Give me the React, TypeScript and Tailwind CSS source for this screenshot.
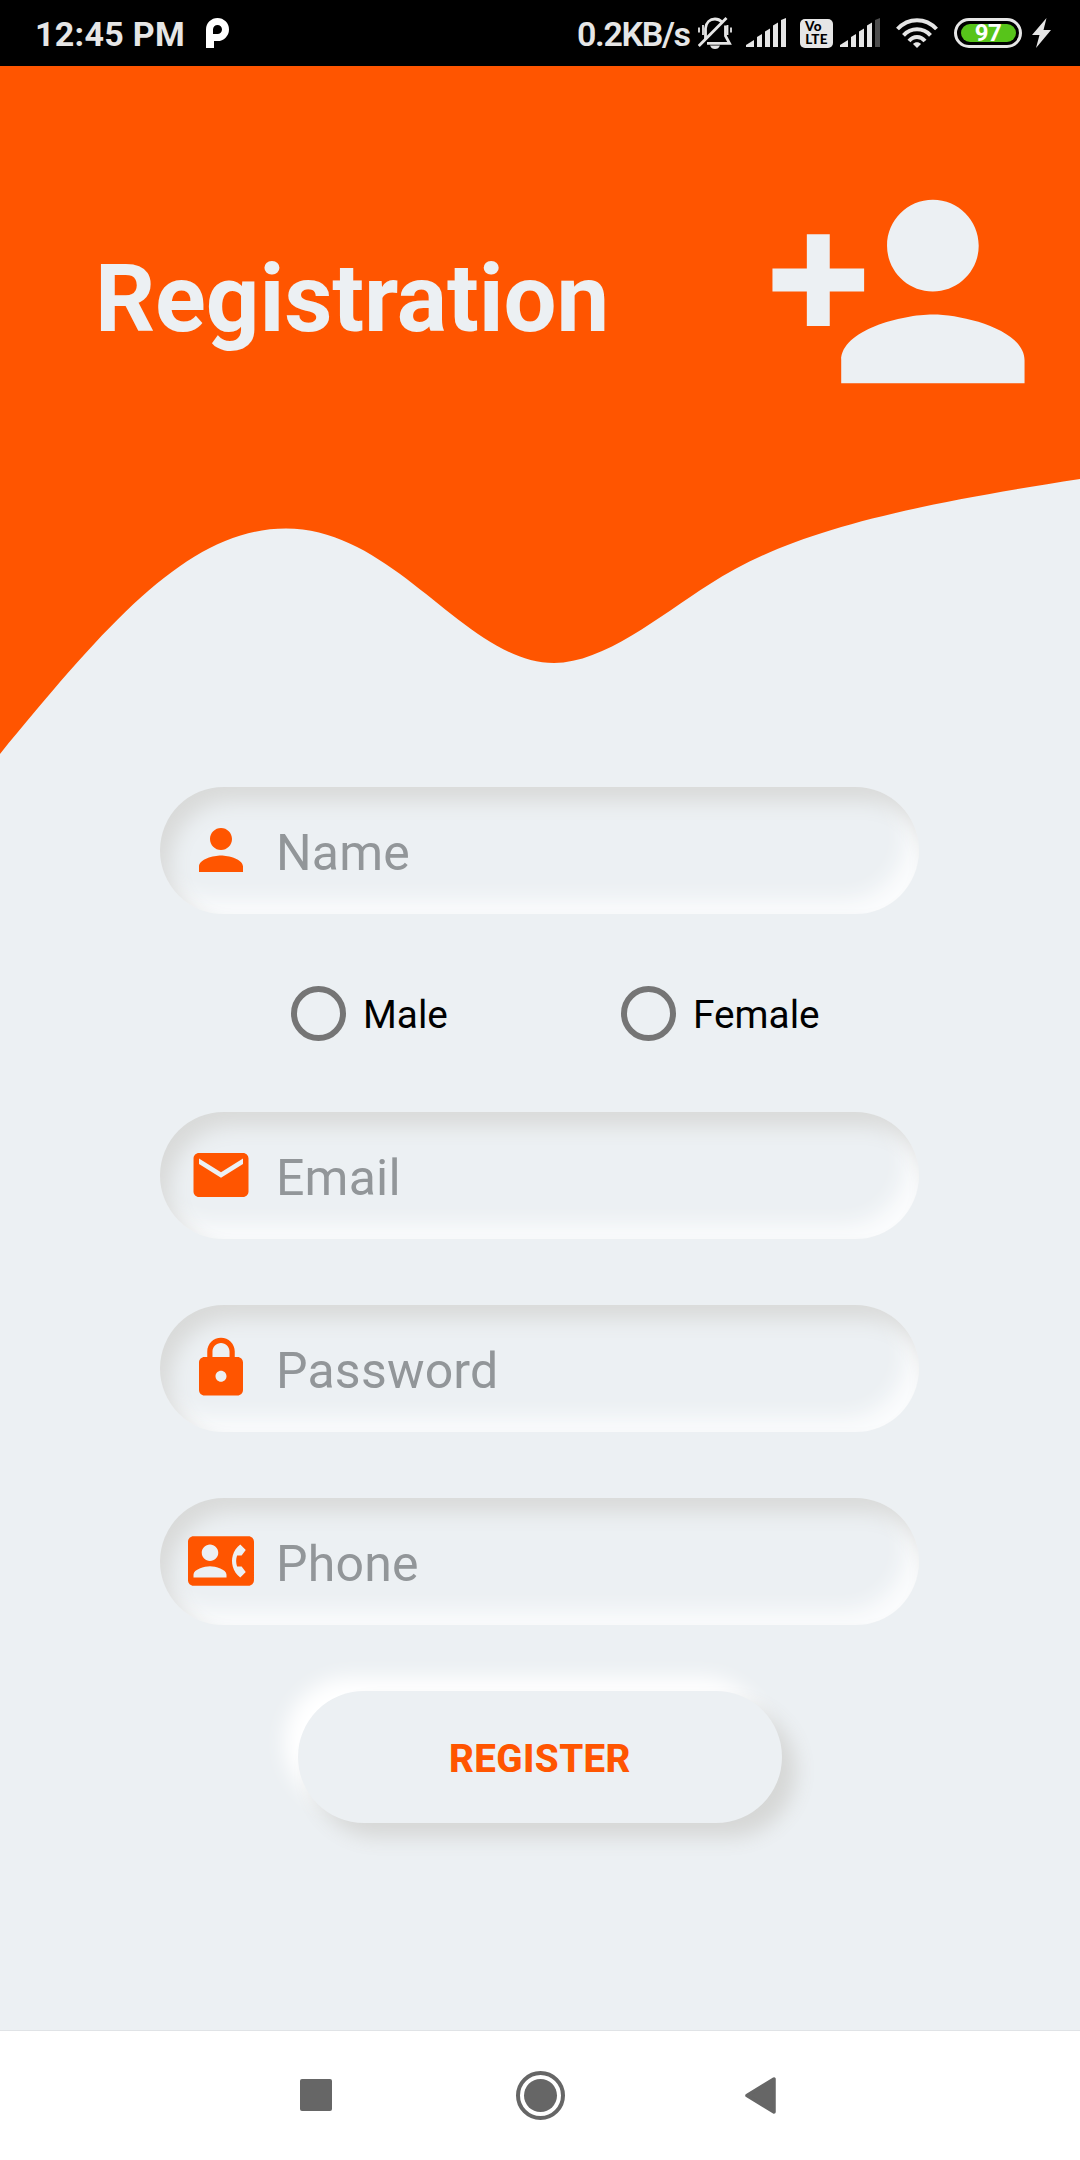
import type { ReactNode } from "react";

const PERSON =
  "M12 12c2.21 0 4-1.79 4-4s-1.79-4-4-4-4 1.79-4 4 1.79 4 4 4zm0 2c-2.67 0-8 1.34-8 4v2h16v-2c0-2.66-5.33-4-8-4z";
const MAIL =
  "M20 4H4c-1.1 0-1.99.9-1.99 2L2 18c0 1.1.9 2 2 2h16c1.1 0 2-.9 2-2V6c0-1.1-.9-2-2-2zm0 4l-8 5-8-5V6l8 5 8-5v2z";
const LOCK =
  "M18 8h-1V6c0-2.76-2.24-5-5-5S7 3.24 7 6v2H6c-1.1 0-2 .9-2 2v10c0 1.1.9 2 2 2h12c1.1 0 2-.9 2-2V10c0-1.1-.9-2-2-2zm-6 9c-1.1 0-2-.9-2-2s.9-2 2-2 2 .9 2 2-.9 2-2 2zm3.1-9H8.9V6c0-1.71 1.39-3.1 3.1-3.1 1.71 0 3.1 1.39 3.1 3.1v2z";
const CONTACT =
  "M22 3H2C.9 3 0 3.9 0 5v14c0 1.1.9 2 2 2h20c1.1 0 1.99-.9 1.99-2L24 5c0-1.1-.9-2-2-2zM8 6c1.66 0 3 1.34 3 3s-1.34 3-3 3-3-1.34-3-3 1.34-3 3-3zm6 12H2v-1c0-2 4-3.1 6-3.1s6 1.1 6 3.1v1zm3.85-4h1.64L21 16l-1.99 1.99c-1.31-.98-2.28-2.38-2.73-3.99-.18-.64-.28-1.31-.28-2s.1-1.36.28-2c.45-1.62 1.42-3.01 2.73-3.99L21 8l-1.51 2h-1.64c-.22.63-.35 1.3-.35 2s.13 1.37.35 2z";
const PERSON_ADD =
  "M15 12c2.21 0 4-1.79 4-4s-1.79-4-4-4-4 1.79-4 4 1.79 4 4 4zm-9-2V7H4v3H1v2h3v3h2v-3h3v-2H6zm9 4c-2.67 0-8 1.34-8 4v2h16v-2c0-2.66-5.33-4-8-4z";

function Signal({ weak }: { weak?: boolean }) {
  return (
    <svg className="h-[30px] w-10 shrink-0" viewBox="0 0 40 30" fill="#e6e6e6">
      <path d="M0 27L8 22V29H0z" />
      <path d="M11 19L16 16V29H11z" />
      <path d="M19 13.500L24 10.500V29H19z" />
      <path d="M27 7.500L32 4.500V29H27z" />
      <path d="M35 2L40 0V29H35z" fill={weak ? "#4d4d4d" : "#e6e6e6"} />
    </svg>
  );
}

function StatusBar() {
  return (
    <header className="flex h-[66px] shrink-0 items-center bg-black pl-[35px] text-[#e6e6e6]">
      <span className="w-[171px] whitespace-nowrap pt-px text-[34px] leading-[66px] font-bold tracking-[0.3px]">
        12:45 PM
      </span>
      <svg className="h-[30px] w-[23px]" viewBox="0 0 23 30">
        <path
          fill="#fff"
          fillRule="evenodd"
          d="M0 30V11.500A11.500 11.500 0 0 1 11.500 0A11.500 11.500 0 0 1 11.500 23H8V30zM8 16H11.500A4.500 4.500 0 1 0 7 11.500V16z"
        />
      </svg>
      <span className="ml-[348px] w-[121px] whitespace-nowrap pt-px text-[34px] leading-[66px] font-semibold tracking-[-1.350px]">
        0.2KB/s
      </span>
      <svg className="h-8 w-[34px]" viewBox="0 0 34 32" fill="none" stroke="#e6e6e6" strokeWidth="2.800">
        <path d="M7.500 22V11.500C8 5.500 12 2 17 2C20 2 22 3 24 5" />
        <path d="M27.500 8.500V19L31.500 26.300H9" />
        <path d="M0.800 29L28.500 1" />
        <path d="M1 10.500V15.500M5 8V18M29.500 8V18M33 10.500V15.500" strokeWidth="1.800" />
        <path d="M12 28.500H22C21 31 19.500 32 17 32C14.500 32 13 31 12 28.500Z" fill="#e6e6e6" stroke="none" />
      </svg>
      <div className="ml-[14px]">
        <Signal />
      </div>
      <div className="ml-[14px] flex h-[29px] w-[33px] flex-col justify-center rounded-[5px] bg-[#e6e6e6] text-center font-[Lato] text-[13.500px] leading-[13.500px] font-black tracking-[0.300px] text-black">
        <span className="pr-1.5">Vo</span>
        <span>LTE</span>
      </div>
      <div className="ml-[7px]">
        <Signal weak />
      </div>
      <svg className="ml-4 h-[30px] w-[42px]" viewBox="0 0 42 30" fill="none" stroke="#e6e6e6" strokeWidth="4">
        <path d="M1.500 11C12.500 -0.700 29.500 -0.700 40.500 11" />
        <path d="M7.500 17.300C15 9.300 27 9.300 34.500 17.300" />
        <path d="M13 23C17.500 17.700 24.500 17.700 29 23" />
        <path d="M21 30L17 26C19 23.700 23 23.700 25 26Z" fill="#e6e6e6" stroke="none" />
      </svg>
      <div className="ml-4 flex h-[30px] w-[68px] items-center justify-center rounded-full border-[3px] border-[#e6e6e6]">
        <div className="flex h-[18px] w-[55px] items-center justify-center rounded-full bg-[#57c41a] text-[24px] leading-none font-bold tracking-[-0.500px] text-white">
          97
        </div>
      </div>
      <svg className="ml-[10px] h-[30px] w-[19px]" viewBox="0 0 19 30" fill="#e6e6e6">
        <path d="M14.500 0L0 17H7.500L4 30L19 12H11.500Z" />
      </svg>
    </header>
  );
}

function Field({ icon, label }: { icon: string; label: string }) {
  return (
    <div className="flex h-[127px] w-[759px] items-start rounded-full bg-[#ecf0f3] pl-7 shadow-[inset_10px_14px_20px_#d9dad9,inset_-13px_-14px_20px_#fbfcfd]">
      <svg className="mt-[30px] size-[66px]" viewBox="0 0 24 24" fill="#ff5500">
        <path d={icon} />
      </svg>
      <span className="mt-9 ml-[22px] text-[50px] leading-[60px] tracking-[0.200px] text-[#929699]">{label}</span>
    </div>
  );
}

function Radio({ children }: { children: ReactNode }) {
  return (
    <label className="flex w-[330px] items-center">
      <span className="size-[55px] rounded-full border-6 border-[#757575]" />
      <span className="ml-[17px] pt-[3px] text-[38.750px] leading-[48px] text-black">{children}</span>
    </label>
  );
}

export default function App() {
  return (
    <div className="flex h-[2160px] w-[1080px] flex-col overflow-hidden bg-[#ecf0f3] font-[Roboto,sans-serif]">
      <StatusBar />
      <section className="flex h-[413px] shrink-0 items-start bg-[#ff5500] pl-[95px] text-[#ecf0f3]">
        <h1 className="mt-[177px] w-[666px] text-[94px] leading-[112px] font-bold tracking-[-0.100px]">Registration</h1>
        <svg className="mt-[88px] size-[275px] shrink-0" viewBox="0 0 24 24" fill="currentColor">
          <path d={PERSON_ADD} />
        </svg>
      </section>
      <svg className="h-[308px] w-full shrink-0" viewBox="0 479 1080 308" fill="#ff5500">
        <path d="M0 478V754C110 620 190 528.500 286 528.500C396 528.500 466 663 554 663C604 663 659.500 616 709.500 584.300C787 534 890 508.500 1080 479V478Z" />
      </svg>
      <main className="flex flex-1 flex-col items-start pl-40">
        <Field icon={PERSON} label="Name" />
        <div className="flex h-[198px] items-center pl-[131px]">
          <Radio>Male</Radio>
          <Radio>Female</Radio>
        </div>
        <div className="flex flex-col gap-[66px]">
          <Field icon={MAIL} label="Email" />
          <Field icon={LOCK} label="Password" />
          <Field icon={CONTACT} label="Phone" />
        </div>
        <button className="mt-[66px] ml-[138px] flex h-[132px] w-[484px] items-center justify-center rounded-full bg-[#ecf0f3] pt-[3px] text-[38.500px] font-extrabold tracking-[0.400px] text-[#ff5500] shadow-[14px_14px_20px_#d6d7d6,-14px_-14px_20px_#ffffff]">
          REGISTER
        </button>
      </main>
      <nav className="flex h-[130px] shrink-0 items-center border-t border-[#e0e3e6] bg-white pb-px pl-[300px]">
        <span className="size-8 rounded-[2px] bg-[#666666]" />
        <span className="ml-[184px] flex size-[49px] items-center justify-center rounded-full border-4 border-[#666666]">
          <span className="size-[33px] rounded-full bg-[#666666]" />
        </span>
        <svg className="ml-[180px] h-[37px] w-[31px]" viewBox="0 0 31 37">
          <path d="M2 18.500L29 2V35Z" fill="#666666" stroke="#666666" strokeWidth="3.500" strokeLinejoin="round" />
        </svg>
      </nav>
    </div>
  );
}
